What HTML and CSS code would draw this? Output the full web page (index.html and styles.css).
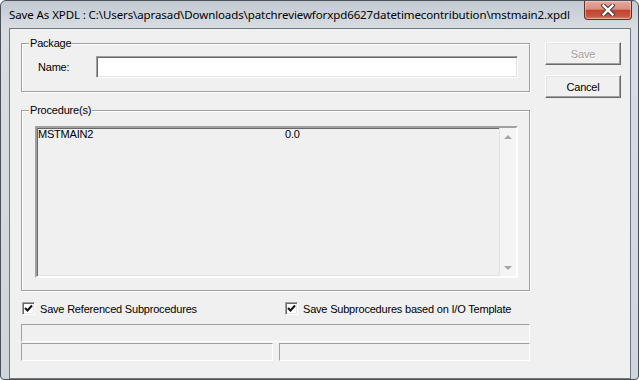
FILE: index.html
```html
<!DOCTYPE html>
<html lang="en">
<head>
<meta charset="UTF-8" />
<meta name="viewport" content="width=device-width, initial-scale=1" />
<title>Save As XPDL</title>
<link rel="stylesheet" href="styles.css">
</head>
<body>

  <div class="window">
    <!-- title bar -->
    <div class="titlebar">
      <span class="title">Save As XPDL : C:\Users\aprasad\Downloads\patchreviewforxpd6627datetimecontribution\mstmain2.xpdl</span>
      <button class="close" type="button">
        <svg width="14" height="12" viewBox="0 0 14 12">
          <path d="M2.5 1.5 L11.5 10.5 M11.5 1.5 L2.5 10.5" stroke="#3b3b3b" stroke-width="4.4" stroke-linecap="square" fill="none"/>
          <path d="M2.5 1.5 L11.5 10.5 M11.5 1.5 L2.5 10.5" stroke="#fff" stroke-width="2.4" stroke-linecap="square" fill="none"/>
        </svg>
      </button>
    </div>

    <!-- client area -->
    <div class="client">
      <div class="main">
        <div class="left">
          <div class="group package">
            <div class="group-title">Package</div>
            <div class="name-row">
              <label class="name-label">Name:</label>
              <div class="field"></div>
            </div>
          </div>

          <div class="group procs">
            <div class="group-title">Procedure(s)</div>
            <div class="listbox">
              <div class="items">
                <div class="item"><span class="col-name">MSTMAIN2</span><span>0.0</span></div>
              </div>
              <div class="scrollbar">
                <span class="sb-btn"><span class="arrow up"></span></span>
                <span class="sb-btn"><span class="arrow down"></span></span>
              </div>
            </div>
          </div>
        </div>

        <div class="buttons">
          <button class="btn disabled" type="button">Save</button>
          <button class="btn" type="button">Cancel</button>
        </div>
      </div>

      <div class="checks">
        <label class="check first">
          <span class="box"><svg width="9" height="9" viewBox="0 0 9 9"><path d="M1 4 L3.5 6.5 L8 1.5" stroke="#111" stroke-width="2" fill="none"/></svg></span>
          <span>Save Referenced Subprocedures</span>
        </label>
        <label class="check">
          <span class="box"><svg width="9" height="9" viewBox="0 0 9 9"><path d="M1 4 L3.5 6.5 L8 1.5" stroke="#111" stroke-width="2" fill="none"/></svg></span>
          <span>Save Subprocedures based on I/O Template</span>
        </label>
      </div>

      <div class="status">
        <div class="cell full"></div>
        <div class="status-row">
          <div class="cell half-a"></div>
          <div class="cell half-b"></div>
        </div>
      </div>
    </div>
  </div>

</body>
</html>
```

FILE: styles.css
```css
 body {
   margin: 0;
   background: #fff;
   font-family: "Liberation Sans", Arial, sans-serif;
   font-size: 11px;
   letter-spacing: -0.2px;
   color: #000;
 }
 .window {
   width: 639px;
   height: 380px;
   box-sizing: border-box;
   border: 1px solid #4b5159;
   border-radius: 6px 6px 4px 4px;
   background: linear-gradient(#c2c9d1, #d9dee4 28px, #cfd5db);
   display: flex;
   flex-direction: column;
 }
 /* title bar */
 .titlebar {
   height: 28px;
   display: flex;
   align-items: flex-start;
   justify-content: space-between;
 }
 .title {
   font-family: "Noto Sans", sans-serif;
   font-size: 11.5px;
   letter-spacing: -0.1px;
   color: #000;
   margin: 6px 0 0 8px;
   white-space: nowrap;
 }
 .close {
   width: 48px;
   height: 19px;
   margin-right: 6px;
   padding: 0;
   border: 1px solid #6a2b22;
   border-top: none;
   border-radius: 0 0 4px 4px;
   background: linear-gradient(#e6aa9e, #dc8c7d 45%, #c4432f 52%, #c65843 85%, #d98670);
   box-shadow: inset 0 0 0 1px rgba(255, 220, 210, 0.5);
   display: flex;
   align-items: center;
   justify-content: center;
 }
 .client {
   height: 342px;
   margin: 0 7px 0 8px;
   border: 1px solid #6f7780;
   background: #f0f0f0;
   padding: 13px 0 0 11px;
   box-sizing: content-box;
   display: flex;
   flex-direction: column;
 }
 .main {
   display: flex;
   align-items: flex-start;
 }
 .left {
   width: 509px;
   margin-top: 1px;
 }
 /* group boxes */
 .group {
   border: 1px solid #a0a0a0;
   box-shadow: 1px 1px 0 #fff, inset 1px 1px 0 #fff;
   box-sizing: border-box;
 }
 .group-title {
   display: table;
   margin: -7px 0 0 7px;
   padding: 0 1px;
   height: 13px;
   line-height: 13px;
   background: #f0f0f0;
 }
 .package {
   height: 49px;
 }
 .name-row {
   display: flex;
   align-items: center;
   margin-top: 6px;
 }
 .name-label {
   width: 58px;
   margin-left: 16px;
 }
 .field {
   width: 422px;
   height: 22px;
   box-sizing: border-box;
   background: #fff;
   border: 1px solid;
   border-color: #a0a0a0 #fff #fff #a0a0a0;
   box-shadow: inset 1px 1px 0 #696969, inset -1px -1px 0 #e3e3e3;
 }
 .procs {
   height: 181px;
   margin-top: 18px;
 }
 .listbox {
   width: 483px;
   height: 152px;
   margin: 9px 0 0 13px;
   box-sizing: border-box;
   border: 2px solid;
   border-color: #a0a0a0 #fff #fff #a0a0a0;
   box-shadow: inset 1px 1px 0 #696969, inset -1px -1px 0 #e3e3e3;
   display: flex;
 }
 .items {
   flex: 1;
   padding: 0 0 0 1px;
 }
 .item {
   display: flex;
   height: 13px;
   line-height: 13px;
 }
 .col-name {
   width: 247px;
 }
 .scrollbar {
   width: 16px;
   background: #f4f4f4;
   border-left: 1px solid #e2e2e2;
   display: flex;
   flex-direction: column;
   justify-content: space-between;
 }
 .sb-btn {
   height: 17px;
   display: flex;
   align-items: center;
   justify-content: center;
 }
 .arrow {
   width: 0;
   height: 0;
   border-left: 4px solid transparent;
   border-right: 4px solid transparent;
 }
 .arrow.up {
   border-bottom: 4px solid #a6a6a6;
 }
 .arrow.down {
   border-top: 4px solid #a6a6a6;
 }
 /* buttons */
 .buttons {
   margin-left: 15px;
   display: flex;
   flex-direction: column;
   gap: 10px;
 }
 .btn {
   width: 76px;
   height: 23px;
   padding: 0;
   font-family: "Liberation Sans", Arial, sans-serif;
   font-size: 11px;
   letter-spacing: -0.2px;
   color: #000;
   background: #f0f0f0;
   border: 1px solid;
   border-color: #fff #696969 #696969 #fff;
   box-shadow: inset -1px -1px 0 #a0a0a0, inset 1px 1px 0 #e3e3e3;
 }
 .btn.disabled {
   color: #a0a0a0;
   text-shadow: 1px 1px 0 #fff;
 }
 /* checkboxes */
 .checks {
   display: flex;
   margin-top: 11px;
   height: 13px;
 }
 .check {
   display: flex;
   align-items: center;
   gap: 5px;
   padding-left: 1px;
 }
 .check.first {
   width: 262px;
 }
 .box {
   width: 13px;
   height: 13px;
   box-sizing: border-box;
   background: #fff;
   border: 1px solid;
   border-color: #a0a0a0 #fff #fff #a0a0a0;
   box-shadow: inset 1px 1px 0 #696969, inset -1px -1px 0 #e3e3e3;
   display: flex;
   align-items: center;
   justify-content: center;
 }
 /* status bar */
 .status {
   margin-top: 9px;
   width: 509px;
   display: flex;
   flex-direction: column;
   gap: 1px;
 }
 .status-row {
   display: flex;
   justify-content: space-between;
 }
 .cell {
   height: 18px;
   box-sizing: border-box;
   border: 1px solid;
   border-color: #a0a0a0 #fff #fff #a0a0a0;
 }
 .half-a {
   width: 252px;
 }
 .half-b {
   width: 251px;
 }
```
